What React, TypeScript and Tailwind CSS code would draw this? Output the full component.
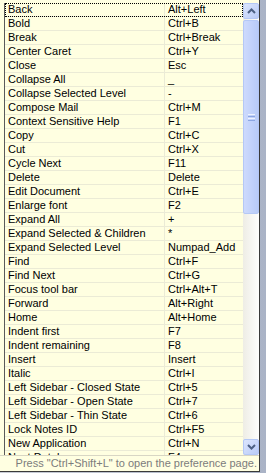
import React from "react";

const rows: [string, string][] = [
  ["Back", "Alt+Left"],
  ["Bold", "Ctrl+B"],
  ["Break", "Ctrl+Break"],
  ["Center Caret", "Ctrl+Y"],
  ["Close", "Esc"],
  ["Collapse All", "_"],
  ["Collapse Selected Level", "-"],
  ["Compose Mail", "Ctrl+M"],
  ["Context Sensitive Help", "F1"],
  ["Copy", "Ctrl+C"],
  ["Cut", "Ctrl+X"],
  ["Cycle Next", "F11"],
  ["Delete", "Delete"],
  ["Edit Document", "Ctrl+E"],
  ["Enlarge font", "F2"],
  ["Expand All", "+"],
  ["Expand Selected & Children", "*"],
  ["Expand Selected Level", "Numpad_Add"],
  ["Find", "Ctrl+F"],
  ["Find Next", "Ctrl+G"],
  ["Focus tool bar", "Ctrl+Alt+T"],
  ["Forward", "Alt+Right"],
  ["Home", "Alt+Home"],
  ["Indent first", "F7"],
  ["Indent remaining", "F8"],
  ["Insert", "Insert"],
  ["Italic", "Ctrl+I"],
  ["Left Sidebar - Closed State", "Ctrl+5"],
  ["Left Sidebar - Open State", "Ctrl+7"],
  ["Left Sidebar - Thin State", "Ctrl+6"],
  ["Lock Notes ID", "Ctrl+F5"],
  ["New Application", "Ctrl+N"],
  ["Next Database", "F4"],
];

function Chevron({ up }: { up?: boolean }) {
  return (
    <svg width="9" height="6" viewBox="0 0 9 6">
      <path
        d={up ? "M1 5 L4.5 1.5 L8 5" : "M1 1 L4.5 4.5 L8 1"}
        fill="none"
        stroke="#4d6185"
        strokeWidth="2"
      />
    </svg>
  );
}

function Scrollbar() {
  return (
    <div className="flex w-[16px] flex-col bg-gradient-to-r from-[#eeede5] to-[#fefefd]">
      <div className="flex h-[16px] items-center justify-center rounded-[2px] border border-[#b4c8f6] bg-gradient-to-br from-[#dce6fd] to-[#b9cbf7]">
        <Chevron up />
      </div>
      <div className="mt-[1px] flex h-[194px] items-center justify-center rounded-[2px] border border-[#b4c8f6] bg-gradient-to-r from-[#cddafd] to-[#b8cbf8]">
        <div className="flex flex-col gap-[1px]">
          <div className="h-[1px] w-[7px] bg-[#eef3fe]" />
          <div className="h-[1px] w-[7px] bg-[#8ca6e2]" />
          <div className="h-[1px] w-[7px] bg-[#eef3fe]" />
          <div className="h-[1px] w-[7px] bg-[#8ca6e2]" />
        </div>
      </div>
      <div className="flex-1" />
      <div className="flex h-[16px] items-center justify-center rounded-[2px] border border-[#b4c8f6] bg-gradient-to-br from-[#dce6fd] to-[#b9cbf7]">
        <Chevron />
      </div>
    </div>
  );
}

export default function App() {
  return (
    <div
      className="flex h-[473px] w-[266px] bg-gradient-to-r from-[#c9cdd6] to-[#aab3c6]"
      style={{ fontFamily: '"Liberation Sans", Arial, sans-serif' }}
    >
      <div className="flex h-[472px] w-[260px] flex-col border-r border-b border-[#3a3a3a] bg-[#ffffe1]">
        <div className="flex h-[455px] pl-[4px] pt-[3px]">
          <div className="flex-1 overflow-hidden border-l border-[#5a5a5a]">
            {rows.map(([name, key], i) => (
              <div
                key={name}
                className={
                  "flex h-[14px] text-[11px] leading-[13px] text-black " +
                  (i === 0 ? "outline outline-1 outline-dotted outline-black -outline-offset-1" : "")
                }
              >
                <div className="w-[160px] shrink-0 border-r border-b border-[#ebebd6] pl-[3px] whitespace-nowrap overflow-hidden">
                  {name}
                </div>
                <div className="flex-1 border-b border-[#ebebd6] pl-[3px] whitespace-nowrap overflow-hidden">
                  {key}
                </div>
              </div>
            ))}
          </div>
          <Scrollbar />
        </div>
        <div className="flex flex-1 items-center justify-end border-t border-[#d8d6c4] pr-[2px] text-[11px] leading-[13px] text-[#7c7c7c]">
          Press "Ctrl+Shift+L" to open the preference page.
        </div>
      </div>
    </div>
  );
}
